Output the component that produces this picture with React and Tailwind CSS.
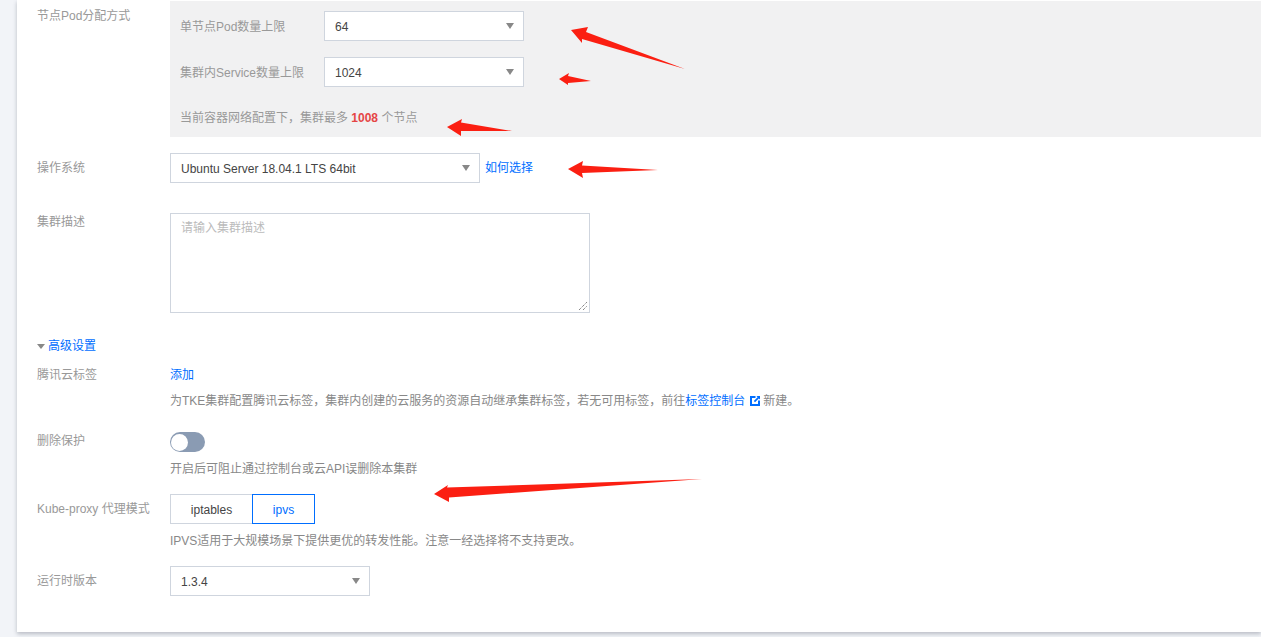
import React from 'react';

const FONT = 'font-["Liberation_Sans","Noto_Sans_CJK_SC",sans-serif]';

const ARROWS = [
  '571,30 588,27 586,32 685,69 582,39 582,43',
  '559,79 569,73 568,76 591,81 568,83 568,85',
  '447,127 462,119 461,122.5 512,131 461,131 461,136',
  '568,169 583,161 582,165.5 658,170 582,173 583,178',
  '434,494 448,485 447,487.5 702,479 449,497.5 449,502',
];

const Caret = () => (
  <span className="h-0 w-0 border-x-[4px] border-t-[6px] border-x-transparent border-t-[#888888]"></span>
);

const Select = ({ value, width }) => (
  <div className={`flex h-[30px] items-center justify-between border border-[#cfd5de] bg-white pl-[10px] pr-[9px] text-[#444444] ${width}`}>
    <span className="pt-[2px] leading-[18px]">{value}</span>
    <Caret />
  </div>
);

const Row = ({ label, className = '', children }) => (
  <div className={`flex ${className}`}>
    <div className="w-[133px] shrink-0 text-[#999999]">{label}</div>
    <div className="min-w-0 flex-1">{children}</div>
  </div>
);

const App = () => {
  return (
    <div className={`relative h-[637px] w-full overflow-hidden bg-[#f2f4f8] text-xs ${FONT}`}>
      {/* Card */}
      <div className="ml-[17px] h-[632px] bg-white pl-5 shadow-[0_2px_4px_rgba(54,58,80,0.3)]">
        {/* Pod allocation */}
        <Row label="节点Pod分配方式" className="pt-px leading-[30px]">
          <div className="h-[136px] bg-[#f1f1f2] pl-[10px] pt-[10px]">
            <div className="flex items-center">
              <span className="w-[144px] pt-[2px] leading-[18px] text-[#999999]">单节点Pod数量上限</span>
              <Select value="64" width="w-[200px]" />
            </div>
            <div className="mt-4 flex items-center">
              <span className="w-[144px] pt-[2px] leading-[18px] text-[#999999]">集群内Service数量上限</span>
              <Select value="1024" width="w-[200px]" />
            </div>
            <p className="mt-4 text-[#999999]">
              当前容器网络配置下，集群最多 <b className="text-[#e54545]">1008</b> 个节点
            </p>
          </div>
        </Row>

        {/* OS */}
        <Row label="操作系统" className="mt-4 leading-[30px]">
          <div className="flex items-center">
            <Select value="Ubuntu Server 18.04.1 LTS 64bit" width="w-[310px]" />
            <a className="ml-[5px] text-[#006eff]">如何选择</a>
          </div>
        </Row>

        {/* Description */}
        <Row label="集群描述" className="mt-[30px] leading-[18px]">
          <div className="relative h-[100px] w-[420px] border border-[#cfd5de] bg-white px-[10px] py-[5px] text-[#bbbbbb]">
            请输入集群描述
            <svg className="absolute bottom-px right-px" width="10" height="10" viewBox="0 0 10 10">
              <path d="M1 9 9 1M5 9 9 5" stroke="#555555" strokeWidth="1" strokeDasharray="1 1" fill="none" />
            </svg>
          </div>
        </Row>

        {/* Advanced */}
        <div className="mt-6 flex h-[18px] items-center text-[#006eff]">
          <span className="mr-[3px] h-0 w-0 border-x-[4px] border-t-[5px] border-x-transparent border-t-[#888888]"></span>
          高级设置
        </div>

        <Row label="腾讯云标签" className="mt-[11px] leading-[18px]">
          <a className="block text-[#006eff]">添加</a>
          <p className="mt-2 flex items-center whitespace-nowrap text-[#888888]">
            为TKE集群配置腾讯云标签，集群内创建的云服务的资源自动继承集群标签，若无可用标签，前往
            <a className="text-[#006eff]">标签控制台</a>
            <svg className="ml-[5px] mr-[3px]" width="10" height="10" viewBox="0 0 10 10">
              <path d="M0 0H5.5V2H2V8H8V4.5H10V10H0Z" fill="#006eff" />
              <path d="M6.5 0H10V3.5L8.8 2.4L5 6.2L3.8 5L7.6 1.2Z" fill="#006eff" />
            </svg>
            新建。
          </p>
        </Row>

        <Row label="删除保护" className="mt-[22px] leading-[18px]">
          <div className="flex h-5 w-[35px] items-center rounded-full bg-[#8a9bb3] pl-px">
            <span className="h-[17px] w-[17px] rounded-full bg-white"></span>
          </div>
          <p className="mt-2 text-[#888888]">开启后可阻止通过控制台或云API误删除本集群</p>
        </Row>

        <Row label="Kube-proxy 代理模式" className="mt-4 leading-[30px]">
          <div className="flex h-[30px]">
            <div className="w-[82px] border border-r-0 border-[#cfd5de] text-center text-[#444444]">iptables</div>
            <div className="w-[63px] border border-[#006eff] text-center text-[#006eff]">ipvs</div>
          </div>
          <p className="mt-2 leading-[18px] text-[#888888]">IPVS适用于大规模场景下提供更优的转发性能。注意一经选择将不支持更改。</p>
        </Row>

        <Row label="运行时版本" className="mt-4 leading-[30px]">
          <Select value="1.3.4" width="w-[200px]" />
        </Row>
      </div>

      {/* Red annotation arrows */}
      <svg className="pointer-events-none absolute left-0 top-0" width="1261" height="637">
        {ARROWS.map((points) => (
          <polygon key={points} points={points} fill="#fb1f12" />
        ))}
      </svg>
    </div>
  );
};

export default App;
